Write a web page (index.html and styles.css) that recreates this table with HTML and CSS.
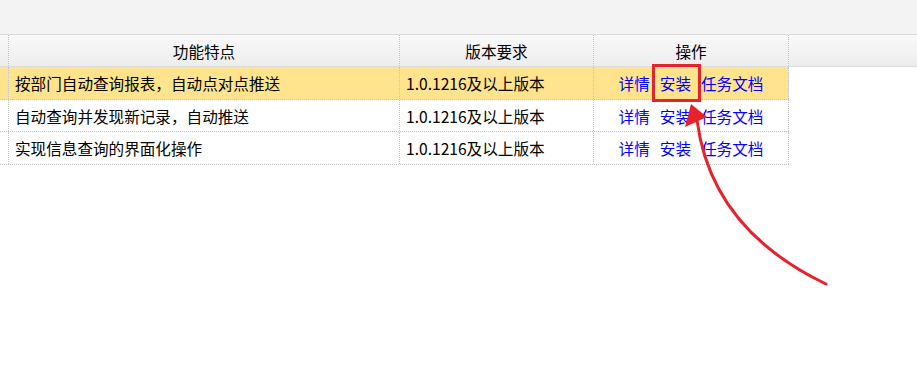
FILE: index.html
```html
<!DOCTYPE html>
<html lang="zh">
<head>
<meta charset="utf-8">
<link rel="stylesheet" href="styles.css">
</head>
<body>
<div class="page">
  <div class="topbar"></div>
  <div class="head">
    <div class="row">
      <div class="cell c0"></div>
      <div class="cell c1 center">功能特点</div>
      <div class="cell c2 center">版本要求</div>
      <div class="cell c3 center">操作</div>
    </div>
  </div>
  <div class="body">
    <div class="row sel">
      <div class="cell c0"></div>
      <div class="cell c1">按部门自动查询报表，自动点对点推送</div>
      <div class="cell c2">1.0.1216及以上版本</div>
      <div class="cell c3 ops"><a>详情</a><a>安装</a><a>任务文档</a></div>
    </div>
    <div class="row">
      <div class="cell c0"></div>
      <div class="cell c1">自动查询并发现新记录，自动推送</div>
      <div class="cell c2">1.0.1216及以上版本</div>
      <div class="cell c3 ops"><a>详情</a><a>安装</a><a>任务文档</a></div>
    </div>
    <div class="row">
      <div class="cell c0"></div>
      <div class="cell c1">实现信息查询的界面化操作</div>
      <div class="cell c2">1.0.1216及以上版本</div>
      <div class="cell c3 ops"><a>详情</a><a>安装</a><a>任务文档</a></div>
    </div>
  </div>
  <svg class="annot" width="917" height="369" viewBox="0 0 917 369">
    <rect x="653.5" y="65.5" width="46" height="35" fill="none" stroke="#e8222c" stroke-width="3"/>
    <path d="M826 284 Q711 229 697 120" fill="none" stroke="#e8222c" stroke-width="3" stroke-linecap="round"/>
    <polygon points="691,104 685,127 707,117" fill="#e8222c"/>
  </svg>
</div>
</body>
</html>
```
FILE: styles.css
```css
html, body {
  margin: 0;
  padding: 0;
  background: #fff;
}
.page {
  position: relative;
  width: 917px;
  height: 369px;
  overflow: hidden;
  font-family: "Microsoft YaHei", "Noto Sans CJK SC", sans-serif;
  font-size: 15.6px;
  color: #000;
}
.topbar {
  height: 34px;
  background: #f3f3f3;
}
.head {
  border-top: 1px solid #dadada;
  border-bottom: 1px solid #dcdcdc;
  background: linear-gradient(#f9f9f9, #ededed);
}
.head .row {
  height: 31px;
  border-bottom: none;
}
.row {
  display: grid;
  grid-template-columns: 9px 391px 194px 195px;
  width: 789px;
  height: 32px;
  box-sizing: border-box;
}
.body .row {
  border-bottom: 1px dotted #c4c4c4;
  height: 33px;
}
.body .row:nth-child(2) {
  height: 32px;
}
.row.sel {
  background: #ffe38d;
}
.cell {
  border-right: 1px dotted #c4c4c4;
  display: flex;
  align-items: center;
  padding: 0 6px;
  white-space: nowrap;
  overflow: hidden;
}
.cell.c0 {
  padding: 0;
}
.cell.center {
  justify-content: center;
}
.ops {
  justify-content: center;
  gap: 10px;
  padding: 0;
}
.ops a {
  color: #0000ff;
  text-decoration: none;
}
.annot {
  position: absolute;
  left: 0;
  top: 0;
  pointer-events: none;
}
```
